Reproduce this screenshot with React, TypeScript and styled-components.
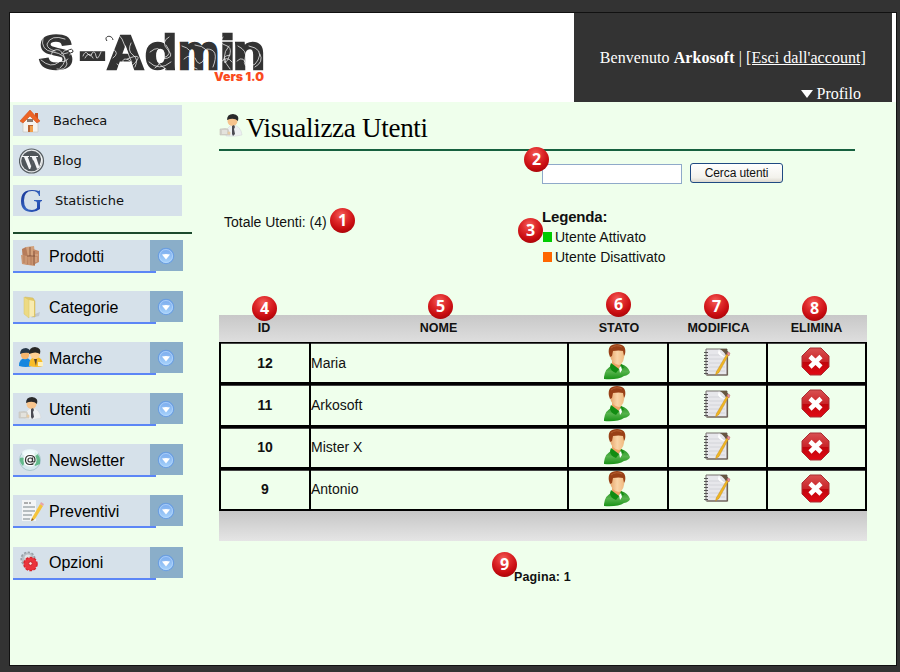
import React from "react";
import styled, { createGlobalStyle } from "styled-components";

const GlobalStyle = createGlobalStyle`
  * { box-sizing: border-box; }
  body { margin: 0; background: #333; overflow: hidden; }
`;

const sans = `"Liberation Sans", Arial, sans-serif`;
const serif = `"Liberation Serif", "Times New Roman", serif`;

const Backdrop = styled.div`
  width: 900px;
  height: 672px;
  padding: 12px 3px 6px 9px;
  background: #333;
`;
const Frame = styled.div`
  height: 654px;
  border: 1px solid #111;
  display: flex;
  flex-direction: column;
  background: #efffec;
  font-family: ${sans};
  color: #111;
`;
const Header = styled.header`
  flex: none;
  height: 89px;
  display: flex;
  background: #fff;
`;
const Brand = styled.div`
  width: 564px;
`;
const Account = styled.div`
  width: 318px;
  background: #333;
  color: #fff;
  font: 16px/20px ${serif};
  display: flex;
  flex-direction: column;
  align-items: flex-end;
  padding: 35px 26px 0 0;
  white-space: nowrap;
`;
const Welcome = styled.div`
  letter-spacing: 0.06px;
`;
const Logout = styled.a`
  color: #fff;
  text-decoration: underline;
`;
const Profile = styled.div`
  display: flex;
  align-items: center;
  gap: 4px;
  margin: 16px 5px 0 0;
`;
const Triangle = styled.i`
  border: 6px solid transparent;
  border-top: 8px solid #fff;
  border-bottom: 0;
`;
const Columns = styled.div`
  flex: 1;
  display: flex;
`;
const Sidebar = styled.nav`
  width: 182px;
  margin-left: 3px;
  padding-top: 3px;
`;
const QuickLink = styled.div<{ $gap: number; $track?: number }>`
  width: 169px;
  height: 31px;
  margin-bottom: 9px;
  display: flex;
  align-items: center;
  gap: ${(p) => p.$gap}px;
  padding-left: 6px;
  background: #d6e1ea;
  font: 13px/31px "DejaVu Sans", Verdana, sans-serif;
  letter-spacing: ${(p) => p.$track ?? 0}px;
`;
const Divider = styled.hr`
  width: 179px;
  height: 2px;
  margin: 16px 0 6px;
  border: 0;
  background: #1b4a2c;
`;
const MenuItem = styled.div`
  width: 170px;
  margin-bottom: 18.1px;
  &::after {
    content: "";
    display: block;
    width: 143px;
    height: 2px;
    background: #5c86f6;
  }
`;
const MenuRow = styled.div`
  height: 31px;
  display: flex;
`;
const MenuLabel = styled.div`
  flex: 1;
  display: flex;
  align-items: center;
  gap: 5px;
  padding-left: 5px;
  background: #d6e1ea;
  font-size: 16px;
  color: #000;
  & > span { padding-top: 2px; }
`;
const MenuArrow = styled.div`
  width: 33.5px;
  display: grid;
  place-items: center;
  padding-top: 1px;
  background: #8aaec9;
`;
const Main = styled.main`
  position: relative;
  flex: 1;
  padding-left: 24px;
`;
const Title = styled.h1`
  display: flex;
  align-items: center;
  gap: 1px;
  width: 636px;
  height: 49px;
  margin: 0;
  border-bottom: 2px solid #17613f;
  font: 27px/30px ${serif};
  letter-spacing: -0.28px;
  color: #000;
  & > span { padding-top: 4px; }
`;
const SearchBar = styled.form`
  display: flex;
  gap: 8px;
  padding: 12px 0 0 323px;
`;
const SearchInput = styled.input`
  width: 140px;
  height: 20px;
  margin-top: 1px;
  border: 1px solid #8fa9c9;
  background: #fff;
  padding: 0;
`;
const SearchButton = styled.button`
  width: 93px;
  height: 20px;
  padding: 0;
  border: 1px solid #1f4a82;
  border-radius: 3px;
  background: linear-gradient(#fff, #f3f2ec 75%, #dcd8cf);
  font: 12px/16px ${sans};
  letter-spacing: -0.08px;
  color: #111;
`;
const Summary = styled.section`
  display: flex;
  height: 131px;
  padding-top: 23px;
  font-size: 14px;
  line-height: 20px;
`;
const Total = styled.div`
  width: 323px;
  padding: 5px 0 0 5px;
`;
const LegendTitle = styled.div`
  font-size: 15px;
  font-weight: bold;
  letter-spacing: -0.18px;
`;
const LegendItem = styled.div<{ $color: string }>`
  display: flex;
  align-items: center;
  gap: 3px;
  padding-left: 1px;
  &::before {
    content: "";
    width: 9px;
    height: 10px;
    background: ${(p) => p.$color};
  }
`;
const columns = "90px 258px 100px 99px 99px";
const HeadRow = styled.div`
  width: 648px;
  height: 27px;
  display: grid;
  grid-template-columns: 90px 259px 102px 97px 99px;
  background: linear-gradient(#c8c8c8, #dedede);
  font: bold 12.5px/27px ${sans};
  letter-spacing: 0.05px;
  text-align: center;
`;
const Body = styled.div`
  width: 648px;
  height: 169px;
  display: grid;
  grid-template-rows: repeat(4, 1fr);
`;
const UserRow = styled.div`
  display: grid;
  grid-template-columns: ${columns};
  border: 2px solid #000;
  border-width: 1px 2px 2px 0;
  box-shadow: inset 0 1px #444;
`;
const Cell = styled.div<{ $kind?: "id" | "icon" }>`
  display: flex;
  align-items: center;
  justify-content: ${(p) => (p.$kind ? "center" : "flex-start")};
  font-weight: ${(p) => (p.$kind === "id" ? "bold" : "normal")};
  font-size: 14px;
  border-left: 2px solid #000;
  min-width: 0;
  ${(p) => p.$kind === "icon" && "padding: 0 2px 2px 0;"}
`;
const TableFoot = styled.div`
  width: 648px;
  height: 30px;
  background: linear-gradient(#c6c6c6, #e5e5e5);
`;
const Pager = styled.div`
  padding: 28px 0 0 295px;
  font: bold 12.5px/16px ${sans};
  letter-spacing: 0.14px;
`;
const Badge = styled.span<{ $x: number; $y: number }>`
  position: absolute;
  left: ${(p) => p.$x - 195}px;
  top: ${(p) => p.$y - 102}px;
  width: 25px;
  height: 25px;
  border-radius: 50%;
  background: radial-gradient(circle at 45% 28%, #f4605a 0, #df2b2c 32%, #c70c10 62%, #8b0004 100%);
  color: #fff;
  font: bold 16px/25px "Open Sans", sans-serif;
  text-align: center;
`;

function Logo() {
  const letters: [string, number, number, number?][] = [
    ["S", 29, 34], ["-", 70, 25, 4], ["A", 97, 37], ["d", 135, 32],
    ["m", 168, 41], ["i", 210, 15], ["n", 223, 32],
  ];
  return (
    <svg width="280" height="88" viewBox="0 0 280 88">
      <g fill="#333" stroke="#333" fontFamily="Liberation Sans, Arial, sans-serif" fontWeight="700" fontSize="48">
        {letters.map(([c, x, w, stroke]) => (
          <text key={c} x={x} y="56" strokeWidth={stroke ?? 2.6} textLength={w} lengthAdjust="spacingAndGlyphs">{c}</text>
        ))}
      </g>
      <g fill="none" stroke="#fff" strokeWidth=".7" strokeLinecap="round">
        <path d="M33 25q-3 12 10 14t14 12q-2 7-10 5M31 47q10 9 18 2t-5-4M43 45c-6-8 8-12 9-4 3-7 11-4 8 1M55 26q-14-5-18 5q0 5 8 7M50 55q8-7 3-14l8-2M48 47q5 4 10-1" />
        <path d="M73 43q2-6 5-2t4-1q3-3 4 3t5-4M75 45q4-8 8 0" />
        <path d="M103 25q4-7 9 1l10 24q-8 6-9 0t6-3q5 4 1 8M107 51q9 10 18-1t-8-4M121 30q-4 8 2 12t2 12M103 36q7 4 0 9" />
        <path d="M140 39q10-8 11 2t-6 14M159 24q-9 5-1 13t-6 9q-5 1-2-5M139 49q10 10 22 0M156 32q8 10-3 13t3 11" />
        <path d="M172 33q11 3 9 12t6 11M185 32q16 2 10 13t-10 0M197 36q13 0 6 18M174 46q8-8 9 6" />
        <path d="M213 24q-5 6 2 8t5 9-5 9q-4-7 5-8M219 33q-10 11 1 23M211 49q6-7 11 0" />
        <path d="M228 33q10 5 7 13t7 10M239 33q15 3 9 14t-11 0M227 48q7-7 10 6M245 54q9-5 5-13" />
      </g>
      <path d="M103 27c-1-6-10-4-6 1M57 38q6-4 6 1-3 2-5 0" fill="none" stroke="#333" strokeWidth="1" />
      <text x="204" y="67.500" fill="#fa4b1e" fontFamily="Inter, sans-serif" fontWeight="900" fontSize="12" textLength="50" lengthAdjust="spacingAndGlyphs">Vers 1.0</text>
    </svg>
  );
}

const HouseIcon = () => (
  <svg width="26" height="26" viewBox="0 0 26 26">
    <path d="M4 13 11 7l8 6v11H4z" fill="#f5f3ef" stroke="#c8c5bf" strokeWidth=".7" />
    <path d="M16 5h3v6h-3z" fill="#c9501f" />
    <path d="m1 13 10-11 10 11-3 2-7-7-7 7z" fill="#ed6526" stroke="#d2531d" strokeWidth=".6" />
    <path d="M9 17h5v7H9z" fill="#b86533" /><path d="M11 18h3v6h-3z" fill="#f2a04b" />
    <path d="M8 11h6v3H8z" fill="#897a70" />
  </svg>
);
const WordPressIcon = () => (
  <svg width="26" height="26" viewBox="0 0 26 26">
    <circle cx="12.500" cy="13" r="12" fill="#e8eaeb" stroke="#555c60" strokeWidth="1.200" />
    <circle cx="12.500" cy="13" r="10.300" fill="#50565a" />
    <path d="M3 8h7v1H8.800l3.400 9.500 2-5.500-1.500-4H11V8h8v1h-2l3.200 9.500 1.500-5q1-3-.7-5.500l2 1q1 6-3 11l-2 1-3.500-9-3.300 9H10L5 9H3z" fill="#f5f6f7" />
  </svg>
);
const LetterGIcon = () => (
  <svg width="26" height="28" viewBox="0 0 26 28">
    <defs><linearGradient id="gBlue" x2="1" y2="1"><stop stopColor="#142f91" /><stop offset=".55" stopColor="#3666c2" /><stop offset="1" stopColor="#1736a0" /></linearGradient></defs>
    <path d="M21 9h-1q-1-5-7-5-8 0-8 9.500T13 23q3 0 5-2v-5q0-2-3-2v-1h8v1q-2 0-2 2v6q-4 3-8 3Q2 25 2 14 2 3 13 3q4 0 7 1l1-1z" fill="url(#gBlue)" />
  </svg>
);
const BoxesIcon = () => (
  <svg width="26" height="26" viewBox="0 0 26 26">
    <path d="m4 6 4-2 2 1v17l-5-2z" fill="#b67c5a" /><path d="m8 4 8-1 1 9-7 2z" fill="#d2a07a" />
    <path d="m15 6 6 2v11l-6 3z" fill="#c58c69" /><path d="m9 12 8 1v10l-7-1z" fill="#c9936e" />
    <path d="m3 12 6 1v9l-5-1z" fill="#cb9773" /><path d="M12 4v9M16 8v14M9 13h8" stroke="#7e4c35" strokeWidth=".8" />
    <path d="M13 14v8M6 13v7" stroke="#a87150" strokeWidth=".6" />
    <path d="M17 12h3M18 14v5" stroke="#e0b594" />
  </svg>
);
const FolderIcon = () => (
  <svg width="26" height="26" viewBox="0 0 26 26">
    <path d="m17 20 5-2-1 4-8 2z" fill="#b6bbc0" opacity=".7" />
    <path d="m7 3 8 1 2 3v16l-7-2z" fill="#e3c964" stroke="#cdb75d" strokeWidth=".5" />
    <path d="m11 6 5 1v15l-6 1z" fill="#f8ebb0" /><path d="m6 3 5 3v18l-5-4z" fill="#edda83" stroke="#d7c46b" strokeWidth=".5" />
  </svg>
);
const PeopleIcon = () => (
  <svg width="26" height="26" viewBox="0 0 26 26">
    <path d="M1 21q0-8 7-8 5 0 6 8-6 2-13 0" fill="#1687df" /><circle cx="7" cy="10" r="4.200" fill="#f6b66e" />
    <path d="M2 9q0-6 6-6 5 1 4 5-6-1-10 1" fill="#263746" />
    <path d="M11 21q0-9 7-9t7 9q-6 2-14 0" fill="#f9bd27" /><circle cx="17" cy="9" r="5" fill="#ffd091" />
    <path d="M11 9q0-7 6-7 7 1 5 7-4-3-11 0" fill="#282724" /><path d="m16 14 2 7 1-7" fill="#5e492f" />
    <path d="M20 17h5v4h-5z" fill="#fff1be" />
  </svg>
);
const ClerkIcon = () => (
  <svg width="26" height="26" viewBox="0 0 26 26">
    <path d="M7 23q0-10 7-11 8 1 9 10-7 2-16 1" fill="#edf0f1" stroke="#d3d7d8" strokeWidth=".5" />
    <circle cx="13.500" cy="8" r="5" fill="#f7c48d" />
    <path d="M8 7q0-6 6-6 7 1 5 7-4-4-11-1" fill="#29292a" />
    <path d="m13 13 2-1 1 2-1 2 1 5-2 2-1-2z" fill="#4b4b52" />
    <path d="M1 16q6-1 8 0l2 6H1z" fill="#d2d0c9" stroke="#c6c4bd" strokeWidth=".6" /><path d="M3 18h5M3 20h5" stroke="#f5f5f0" />
    <circle cx="10" cy="20" r="1.500" fill="#e8cba3" />
  </svg>
);
const MailIcon = () => (
  <svg width="26" height="26" viewBox="0 0 26 26">
    <circle cx="12" cy="13" r="10.500" fill="#d6e9ed" stroke="#9abac0" strokeWidth=".7" />
    <path d="M2 11q4-2 5 3l-2 5q-4-4-3-8M17 5q6 3 5 12l-5 2-2-5z" fill="#63b98b" />
    <ellipse cx="12" cy="6" rx="8" ry="4" fill="#f5ffff" opacity=".8" />
    <circle cx="12" cy="13" r="6.600" fill="#fff" opacity=".85" />
    <path d="M14.500 10.500v4q2.500 1.500 2.500-1.500 0-4.500-5-4.500-4.500 0-4.500 4.500t4.500 4.500q2.500 0 3.500-1M14.500 13q0-2-2.200-2t-2.300 2 2.300 2 2.200-2" fill="none" stroke="#333" strokeWidth="1.200" />
  </svg>
);
const NoteIcon = () => (
  <svg width="26" height="26" viewBox="0 0 26 26">
    <path d="M4 2h14v21H4z" fill="#f3f5f6" /><path d="M6 5h4m1 0h2" stroke="#666" />
    <path d="M5 9h12M5 13h12M5 17h9M5 21h7" stroke="#a3aaaf" strokeWidth="1.300" />
    <path d="m14 20 8-14 3 2-8 13-4 2z" fill="#f5c43b" /><path d="m22 6 1-2 3 2-1 2z" fill="#e6a4aa" /><path d="m14 20-1 3 3-1" fill="#885f2f" />
  </svg>
);
const GearIcon = () => (
  <svg width="26" height="26" viewBox="0 0 26 26">
    <circle cx="10" cy="10" r="6.500" fill="#b8c0c6" stroke="#98a0a7" strokeWidth="2.200" strokeDasharray="2.200 1.500" />
    <circle cx="10" cy="10" r="6" fill="#b8c0c6" /><circle cx="10" cy="9" r="3.500" fill="#dfe5e8" />
    <circle cx="12.500" cy="15" r="6.300" fill="#e52c32" stroke="#d9242c" strokeWidth="2" strokeDasharray="2.800 1.200" />
    <circle cx="12.500" cy="15" r="6" fill="#eb343c" /><circle cx="12.500" cy="14.500" r="1.800" fill="#ffe4df" stroke="#c5252b" />
  </svg>
);
const ArrowIcon = () => (
  <svg width="18" height="18" viewBox="0 0 18 18">
    <defs><linearGradient id="arrowBlue" x2="0" y2="1"><stop stopColor="#78a9ed" /><stop offset="1" stopColor="#a8d4fc" /></linearGradient></defs>
    <circle cx="9" cy="9" r="7.700" fill="url(#arrowBlue)" stroke="#6a9ee0" strokeWidth="1.100" />
    <circle cx="9" cy="9" r="6.500" fill="none" stroke="#b9d8fa" strokeWidth=".7" />
    <path d="M5 7.500q4-1 8 0l-4 5z" fill="#fff" />
  </svg>
);
const ActiveUserIcon = () => (
  <svg width="28" height="37" viewBox="0 0 28 37">
    <defs>
      <linearGradient id="shirt" x2="0" y2="1"><stop stopColor="#249321" /><stop offset=".5" stopColor="#56b34c" /><stop offset="1" stopColor="#199317" /></linearGradient>
      <linearGradient id="skin"><stop stopColor="#e6a46a" /><stop offset=".5" stopColor="#fad4a7" /><stop offset="1" stopColor="#efb87d" /></linearGradient>
    </defs>
    <path d="M1 34q1-9 9-12l8-1q7 2 9 8-1 3-6 4-6 4-20 3z" fill="url(#shirt)" />
    <path d="M9 17h9v6l-2 3q-5 0-7-4z" fill="#efa568" />
    <path d="m8 20 8 6-3 4q-6-2-6-7zm10 1-2 5 5-1q-1-3-3-4" fill="#128c12" />
    <path d="m16 25 2-2 1 4-2 3z" fill="#fff" />
    <path d="M7 9q1-6 7-6t7.500 6q0 12-5.500 13Q8 21 7 12z" fill="url(#skin)" />
    <path d="M6 11Q4 1 14 1q10 0 8 10l-1 2-1-5q-4-1-10 0l-1 5-2 1z" fill="#994016" />
    <path d="M8 5q5-4 11-1" stroke="#b66031" fill="none" />
  </svg>
);
const EditIcon = () => (
  <svg width="28" height="30" viewBox="0 0 28 30">
    <path d="M3 2h21v26H3z" fill="#e7e7eb" stroke="#77716e" />
    <path d="M24.500 4v24H4" fill="none" stroke="#6e6157" strokeWidth="1.200" />
    <path d="M6 8h16M6 12h16M6 16h16M6 20h16M6 24h16" stroke="#d3d4d9" />
    <path d="M17 2h7v9q-2-6-7-9" fill="#665641" /><path d="M16 2q1 6 7 8-6 0-8-4z" fill="#fff" />
    <path d="M1 5.500h4M1 8.500h4M1 11.500h4M1 14.500h4M1 17.500h4M1 20.500h4M1 23.500h4M1 26.500h4" stroke="#555" strokeWidth="1" />
    <path d="m12.500 28 .7-3L23.800 7l1.700 1-9.500 17.500z" fill="#f0b621" stroke="#b9801a" strokeWidth=".4" />
    <path d="m24 7 1-2 2 1-1 3z" fill="#e8949a" stroke="#bb6262" strokeWidth=".5" />
  </svg>
);
const DeleteIcon = () => (
  <svg width="29" height="29" viewBox="0 0 29 29">
    <defs><linearGradient id="stopRed" x2="0" y2="1"><stop stopColor="#d85151" /><stop offset=".5" stopColor="#ca2529" /><stop offset=".51" stopColor="#be060c" /><stop offset="1" stopColor="#e20914" /></linearGradient></defs>
    <path d="M9 1h11l8 8v11l-8 8H9l-8-8V9z" fill="url(#stopRed)" stroke="#a92e33" />
    <path d="m9 9.500 11 10.500M20 9.500 9 20" stroke="#fff" strokeWidth="4.500" />
  </svg>
);

const menu: [string, () => React.JSX.Element][] = [
  ["Prodotti", BoxesIcon],
  ["Categorie", FolderIcon],
  ["Marche", PeopleIcon],
  ["Utenti", ClerkIcon],
  ["Newsletter", MailIcon],
  ["Preventivi", NoteIcon],
  ["Opzioni", GearIcon],
];
const users: [number, string][] = [[12, "Maria"], [11, "Arkosoft"], [10, "Mister X"], [9, "Antonio"]];
const badges = [[330, 208], [524, 147], [518, 218], [252, 296], [428, 294], [606, 292], [704, 294], [802, 296], [492, 552]];

export default function App() {
  return (
    <Backdrop>
      <GlobalStyle />
      <Frame>
        <Header>
          <Brand><Logo /></Brand>
          <Account>
            <Welcome>Benvenuto <b>Arkosoft</b> | <Logout>[Esci dall'account]</Logout></Welcome>
            <Profile><Triangle />Profilo</Profile>
          </Account>
        </Header>
        <Columns>
          <Sidebar>
            <QuickLink $gap={8} $track={-0.2}><HouseIcon />Bacheca</QuickLink>
            <QuickLink $gap={8}><WordPressIcon />Blog</QuickLink>
            <QuickLink $gap={10}><LetterGIcon />Statistiche</QuickLink>
            <Divider />
            {menu.map(([label, Icon]) => (
              <MenuItem key={label}>
                <MenuRow>
                  <MenuLabel><Icon /><span>{label}</span></MenuLabel>
                  <MenuArrow><ArrowIcon /></MenuArrow>
                </MenuRow>
              </MenuItem>
            ))}
          </Sidebar>
          <Main>
            <Title><ClerkIcon /><span>Visualizza Utenti</span></Title>
            <SearchBar>
              <SearchInput aria-label="Cerca utenti" />
              <SearchButton type="button">Cerca utenti</SearchButton>
            </SearchBar>
            <Summary>
              <Total>Totale Utenti: (4)</Total>
              <div>
                <LegendTitle>Legenda:</LegendTitle>
                <LegendItem $color="#0c0">Utente Attivato</LegendItem>
                <LegendItem $color="#f60">Utente Disattivato</LegendItem>
              </div>
            </Summary>
            <HeadRow>
              <span>ID</span><span>NOME</span><span>STATO</span><span>MODIFICA</span><span>ELIMINA</span>
            </HeadRow>
            <Body>
              {users.map(([id, name]) => (
                <UserRow key={id}>
                  <Cell $kind="id">{id}</Cell>
                  <Cell>{name}</Cell>
                  <Cell $kind="icon"><ActiveUserIcon /></Cell>
                  <Cell $kind="icon"><EditIcon /></Cell>
                  <Cell $kind="icon"><DeleteIcon /></Cell>
                </UserRow>
              ))}
            </Body>
            <TableFoot />
            <Pager>Pagina: 1</Pager>
            {badges.map(([x, y], i) => (
              <Badge key={i} $x={x} $y={y}>{i + 1}</Badge>
            ))}
          </Main>
        </Columns>
      </Frame>
    </Backdrop>
  );
}
